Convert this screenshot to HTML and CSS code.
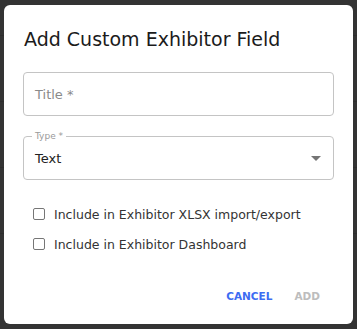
FILE: index.html
```html
<!DOCTYPE html>
<html>
<head>
    <meta charset="UTF-8">
    <title>Add Custom Exhibitor Field</title>
    <link rel="stylesheet" href="styles.css">
</head>
<body>
    <div class="page">
        <div class="row"></div>
        <div class="row"></div>
        <div class="row"></div>
        <div class="row"></div>
    </div>

    <div class="backdrop">
        <div class="dialog">
            <h2 class="dialog-title">Add Custom Exhibitor Field</h2>

            <div class="dialog-content">
                <div class="field">
                    <span class="placeholder">Title *</span>
                </div>

                <div class="field select">
                    <span class="legend">Type *</span>
                    <span class="value">Text</span>
                    <svg class="arrow" width="10" height="5" viewBox="0 0 10 5">
                        <path d="M0 0 L10 0 L5 5 Z" fill="#757575"/>
                    </svg>
                </div>

                <label class="check">
                    <span class="box"></span>
                    Include in Exhibitor XLSX import/export
                </label>
                <label class="check">
                    <span class="box"></span>
                    Include in Exhibitor Dashboard
                </label>
            </div>

            <div class="dialog-actions">
                <button class="btn primary">Cancel</button>
                <button class="btn" disabled>Add</button>
            </div>
        </div>
    </div>
</body>
</html>
```

FILE: styles.css
```css
body {
    margin: 0;
    font-family: "DejaVu Sans", sans-serif;
    background-color: #ffffff;
    overflow: hidden;
}
.page {
    height: 329px;
    padding-top: 35px;
    box-sizing: border-box;
    overflow: hidden;
}
.row {
    height: 65px;
    border-top: 1px solid #e0e0e0;
}
.backdrop {
    position: absolute;
    top: 0;
    left: 0;
    width: 357px;
    height: 329px;
    background-color: rgba(0,0,0,0.8);
}
.dialog {
    position: absolute;
    top: 5px;
    left: 4px;
    width: 349px;
    height: 319px;
    box-sizing: border-box;
    background-color: white;
    border-radius: 6px;
    display: flex;
    flex-direction: column;
}
.dialog-title {
    margin: 0;
    padding: 22px 20px 0 20px;
    font-size: 19px;
    font-weight: normal;
    line-height: 24px;
    color: #1b1b1b;
}
.dialog-content {
    padding: 21px 19px 0 19px;
    flex: 1;
}
.field {
    position: relative;
    height: 44px;
    box-sizing: border-box;
    border: 1px solid #c4c4c4;
    border-radius: 4px;
    display: flex;
    align-items: center;
    padding: 0 11px;
    margin-bottom: 20px;
    font-size: 13px;
}
.select {
    margin-bottom: 19px;
}
.placeholder {
    color: #8a8a8a;
}
.value {
    color: #222;
    flex: 1;
}
.legend {
    position: absolute;
    top: -6px;
    left: 8px;
    padding: 0 3px;
    background: white;
    font-size: 9px;
    line-height: 10px;
    color: #9a9a9a;
}
.arrow {
    margin-right: 1px;
}
.check {
    display: flex;
    align-items: center;
    height: 30px;
    padding-left: 10px;
    font-size: 12.5px;
    color: #333;
}
.box {
    width: 10px;
    height: 10px;
    border: 1.5px solid #767676;
    border-radius: 2px;
    margin-right: 9px;
}
.dialog-actions {
    display: flex;
    justify-content: flex-end;
    gap: 22px;
    padding: 0 33px 22px 0;
}
.btn {
    background: none;
    border: none;
    padding: 0;
    font-family: inherit;
    font-size: 10.5px;
    font-weight: bold;
    letter-spacing: 0;
    text-transform: uppercase;
    color: #bdbdbd;
}
.btn.primary {
    color: #3d6cf2;
}
```
